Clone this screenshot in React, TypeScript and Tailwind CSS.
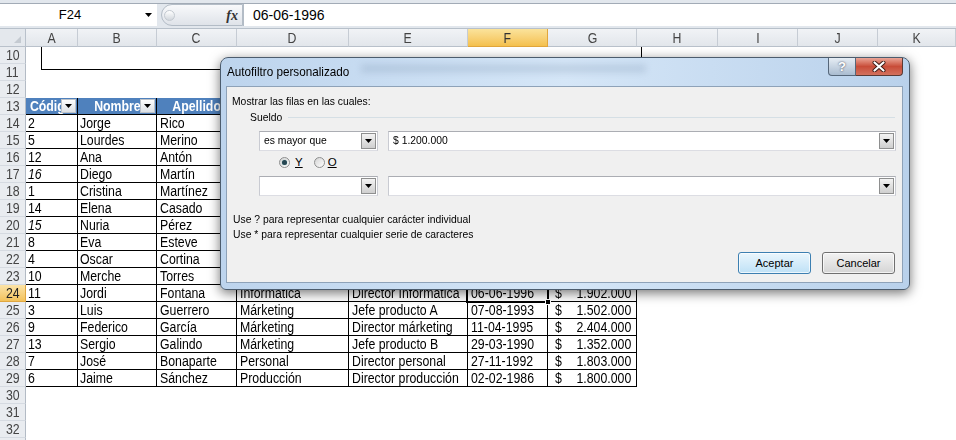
import React from "react"

type Col = { k: string; w: string; pad: string }

const cols: Col[] = [
  { k: "A", w: "w-[52px]", pad: "pl-[2px]" },
  { k: "B", w: "w-[79px]", pad: "pl-[2px]" },
  { k: "C", w: "w-[80px]", pad: "pl-[3px]" },
  { k: "D", w: "w-[112px]", pad: "pl-[3px]" },
  { k: "E", w: "w-[119px]", pad: "pl-[3px]" },
  { k: "F", w: "w-[80px]", pad: "pl-[3px]" },
  { k: "G", w: "w-[89px]", pad: "pl-[3px]" },
  { k: "H", w: "w-[81px]", pad: "pl-[3px]" },
  { k: "I", w: "w-[80px]", pad: "pl-[3px]" },
  { k: "J", w: "w-[80px]", pad: "pl-[3px]" },
  { k: "K", w: "w-[78px]", pad: "pl-[3px]" },
]

// las columnas D-G de la fila 13 quedan tapadas por el diálogo
const headers = ["Código", "Nombre", "Apellido", "", "", "", ""]

// codigo, cursiva, nombre, apellido, departamento, puesto, fecha, sueldo
// (filas 14-23: D-G quedan detrás del diálogo)
const data: [string, boolean, string, string, string, string, string, string][] = [
  ["2", false, "Jorge", "Rico", "", "", "", ""],
  ["5", false, "Lourdes", "Merino", "", "", "", ""],
  ["12", false, "Ana", "Antón", "", "", "", ""],
  ["16", true, "Diego", "Martín", "", "", "", ""],
  ["1", false, "Cristina", "Martínez", "", "", "", ""],
  ["14", false, "Elena", "Casado", "", "", "", ""],
  ["15", true, "Nuria", "Pérez", "", "", "", ""],
  ["8", false, "Eva", "Esteve", "", "", "", ""],
  ["4", false, "Oscar", "Cortina", "", "", "", ""],
  ["10", false, "Merche", "Torres", "", "", "", ""],
  ["11", false, "Jordi", "Fontana", "Informática", "Director Informática", "06-06-1996", "1.902.000"],
  ["3", false, "Luis", "Guerrero", "Márketing", "Jefe producto A", "07-08-1993", "1.502.000"],
  ["9", false, "Federico", "García", "Márketing", "Director márketing", "11-04-1995", "2.404.000"],
  ["13", false, "Sergio", "Galindo", "Márketing", "Jefe producto B", "29-03-1990", "1.352.000"],
  ["7", false, "José", "Bonaparte", "Personal", "Director personal", "27-11-1992", "1.803.000"],
  ["6", false, "Jaime", "Sánchez", "Producción", "Director producción", "02-02-1986", "1.800.000"],
]

function Cx({ children, className = "" }: { children?: React.ReactNode; className?: string }) {
  return <span className={`inline-block whitespace-nowrap origin-left scale-x-[0.88] ${className}`}>{children}</span>
}

function Dx({ children, className = "" }: { children?: React.ReactNode; className?: string }) {
  return <span className={`inline-block whitespace-nowrap origin-left scale-x-[0.9] ${className}`}>{children}</span>
}

function Tri() {
  return (
    <svg width="7" height="4" viewBox="0 0 7 4">
      <path d="M0 0h7L3.5 4z" fill="#000" />
    </svg>
  )
}

function RowHead({ n, active }: { n?: number; active?: boolean }) {
  return (
    <div
      className={
        active
          ? "w-[26px] shrink-0 h-[17px] flex items-center justify-center border-r border-b border-[#e0a740] bg-linear-to-b from-[#fbe3a6] to-[#f3c25a] text-[#222]"
          : "w-[26px] shrink-0 h-[17px] flex items-center justify-center border-r border-b border-[#d5dae1] border-r-[#b3bbc5] bg-[#e9ecf0] text-[#444]"
      }
    >
      <span className="inline-block scale-x-[0.88] text-[14px] leading-[16px]">{n}</span>
    </div>
  )
}

function Combo({ w, text }: { w: string; text?: string }) {
  return (
    <div className={`${w} h-[20px] flex bg-white border border-[#abadb3] border-x-[#c9cbd2] border-b-[#dcdde3] p-[1px]`}>
      <div className="flex-1 flex items-center pl-[3px] text-[11.5px]">
        <Dx>{text}</Dx>
      </div>
      <div className="w-[15px] h-full bg-linear-to-b from-[#f3f3f3] to-[#cfcfcf] border border-[#8e8f8f] flex items-center justify-center">
        <Tri />
      </div>
    </div>
  )
}

function Radio({ checked }: { checked?: boolean }) {
  return (
    <div className="w-[11px] h-[11px] rounded-full border border-[#8e8f8f] bg-linear-to-br from-[#d4d4d4] to-white flex items-center justify-center">
      {checked && <div className="w-[5px] h-[5px] rounded-full bg-[#264652] shadow-[0_0_1px_#6aa]" />}
    </div>
  )
}

export default function App() {
  const emptyTop = [10, 11, 12]
  const emptyBottom = [30, 31, 32]

  return (
    <div className="relative w-[956px] h-[440px] overflow-hidden bg-white font-['Liberation_Sans',Arial,sans-serif] text-black">
      {/* barra de fórmulas */}
      <div className="h-[29px] bg-[#e2e7ed] border-b border-[#b7c0ca] pt-[3px]">
        <div className="h-[23px] flex border-t border-[#a2abb6]">
          <div className="w-[157px] bg-white flex">
            <div className="flex-1 flex items-center justify-center text-[13px]">F24</div>
            <div className="w-[17px] flex items-center justify-center">
              <Tri />
            </div>
          </div>
          <div className="w-[4px] bg-[#e2e7ed]" />
          <div className="w-[82px] rounded-l-full border border-[#b3bcc6] bg-linear-to-b from-[#f8f9fb] to-[#dfe3e9] flex items-center justify-between pl-[2px] pr-[4px]">
            <div className="w-[11px] h-[11px] rounded-full border border-[#c3c9d0] bg-linear-to-b from-white to-[#d2d7dd]" />
            <span className="font-['Liberation_Serif',serif] italic font-bold text-[14px] text-[#333]">fx</span>
          </div>
          <div className="flex-1 bg-white border-l border-[#b3bcc6] flex items-center pl-[9px] text-[14px]">06-06-1996</div>
        </div>
      </div>

      {/* cabeceras de columna */}
      <div className="flex h-[18px]">
        <div className="w-[26px] shrink-0 relative border-r border-b border-[#b9c1cb] bg-[#e4e8ed]">
          <svg className="absolute right-[4px] bottom-[3px]" width="7" height="7" viewBox="0 0 7 7">
            <path d="M7 0v7H0z" fill="#c4cad1" />
          </svg>
        </div>
        {cols.map((c) => (
          <div
            key={c.k}
            className={
              c.k === "F"
                ? `${c.w} shrink-0 flex items-center justify-center border-r border-b border-[#e1a63c] bg-linear-to-b from-[#fbe39b] to-[#f4c04c] text-[#333]`
                : `${c.w} shrink-0 flex items-center justify-center border-r border-b border-[#c6ccd4] border-b-[#b9c1cb] bg-linear-to-b from-[#f1f3f6] to-[#e2e6eb] text-[#444]`
            }
          >
            <span className="inline-block scale-x-[0.88] text-[14px] leading-[16px]">{c.k}</span>
          </div>
        ))}
      </div>

      {emptyTop.map((n) => (
        <div key={n} className="flex h-[17px]">
          <RowHead n={n} />
        </div>
      ))}

      {/* fila 13: encabezados de tabla */}
      <div className="flex h-[17px]">
        <RowHead n={13} />
        {cols.slice(0, 7).map((c, i) => (
          <div
            key={c.k}
            className={`${c.w} shrink-0 relative h-[17px] border-r border-b border-black bg-[#4f81bd] overflow-hidden flex items-center justify-center`}
          >
            <span className="inline-block whitespace-nowrap scale-x-[0.88] text-[14px] leading-[16px] font-bold text-white">{headers[i]}</span>
            <div className="absolute right-[1px] top-[1px] w-[15px] h-[14px] bg-linear-to-b from-[#fdfdfd] to-[#dde1e6] border border-[#bcc2c9] flex items-center justify-center">
              <Tri />
            </div>
          </div>
        ))}
      </div>

      {data.map((d, idx) => {
        const n = 14 + idx
        const vals = [d[0], d[2], d[3], d[4], d[5], d[6]]
        return (
          <div key={n} className="flex h-[17px]">
            <RowHead n={n} active={n === 24} />
            {cols.slice(0, 6).map((c, i) => (
              <div
                key={c.k}
                className={`${c.w} ${c.pad} shrink-0 h-[17px] border-r border-b border-black overflow-hidden text-[14px] leading-[16px]`}
              >
                <Cx className={i === 0 && d[1] ? "italic" : ""}>{vals[i]}</Cx>
              </div>
            ))}
            <div className="w-[89px] shrink-0 h-[17px] border-r border-b border-black flex justify-between pl-[7px] pr-[5px] text-[14px] leading-[16px]">
              {d[7] && <Cx>$</Cx>}
              <span className="inline-block whitespace-nowrap origin-right scale-x-[0.88]">{d[7]}</span>
            </div>
          </div>
        )
      })}

      {emptyBottom.map((n) => (
        <div key={n} className="flex h-[17px]">
          <RowHead n={n} />
        </div>
      ))}
      <div className="flex h-[17px]">
        <RowHead />
      </div>

      {/* forma dibujada sobre las filas 10-11 */}
      <div className="absolute left-[41px] top-[47px] w-[601px] h-[23px] border-x border-b border-black" />

      {/* celda activa F24 */}
      <div className="absolute left-[466px] top-[283px] w-[83px] h-[20px] border-2 border-black" />
      <div className="absolute left-[545px] top-[299px] w-[6px] h-[6px] bg-black border border-white" />

      {/* diálogo Autofiltro personalizado */}
      <div className="absolute left-[220px] top-[57px] w-[690px] h-[233px] rounded-t-[8px] rounded-b-[6px] border border-[#4c5c6d] bg-linear-to-r from-[#bdd4ed] via-[#d5e6f7] to-[#b9d1eb] pl-[5px] pr-[6px] pb-[6px] flex flex-col shadow-[0_3px_12px_rgba(0,0,0,0.55)]">
        <div className="absolute left-[140px] top-[6px] w-[285px] h-[9px] bg-[#7f98b5]/25 blur-[3px]" />
        <div className="relative h-[28px] flex justify-between">
          <div className="self-center pl-[1px] text-[13px]">
            <Dx>Autofiltro personalizado</Dx>
          </div>
          <div className="flex h-[18px]">
            <div className="w-[28px] h-[18px] rounded-bl-[4px] border border-t-0 border-[#56677a] bg-linear-to-b from-[#e6edf4] to-[#aabcd0] flex items-center justify-center">
              <span className="text-white font-bold text-[13px] leading-none [text-shadow:0_0_2px_#334]">?</span>
            </div>
            <div className="w-[47px] h-[18px] rounded-br-[4px] border border-t-0 border-l-0 border-[#5a3a35] bg-linear-to-b from-[#eaa597] via-[#c84c38] to-[#d3715e] flex items-center justify-center">
              <svg width="14" height="11" viewBox="0 0 14 11">
                <path d="M2.5 1.5l9 8M11.5 1.5l-9 8" stroke="#3a1a15" strokeWidth="4" strokeLinecap="round" />
                <path d="M2.5 1.5l9 8M11.5 1.5l-9 8" stroke="#fff" strokeWidth="2.2" strokeLinecap="round" />
              </svg>
            </div>
          </div>
        </div>

        <div className="flex-1 border border-[#8ea2b8] bg-[#f0f0f0] flex flex-col pl-[5px] pr-[6px] pt-[8px] text-[11.5px]">
          <div className="h-[13px] leading-[13px]">
            <Dx>Mostrar las filas en las cuales:</Dx>
          </div>
          <div className="h-[13px] mt-[3px] ml-[18px] flex items-center">
            <div className="w-[38px] leading-[13px]">
              <Dx>Sueldo</Dx>
            </div>
            <div className="flex-1 h-px bg-[#d5dfe5] mr-[1px]" />
          </div>
          <div className="mt-[7px] ml-[27px] flex gap-[10px]">
            <Combo w="w-[119px]" text="es mayor que" />
            <Combo w="flex-1" text="$ 1.200.000" />
          </div>
          <div className="h-[13px] mt-[5px] ml-[47px] flex items-center leading-[13px]">
            <Radio checked />
            <span className="ml-[5px] underline">Y</span>
            <div className="ml-[11px]">
              <Radio />
            </div>
            <span className="ml-[3px] underline">O</span>
          </div>
          <div className="mt-[7px] ml-[27px] flex gap-[10px]">
            <Combo w="w-[119px]" />
            <Combo w="flex-1" />
          </div>
          <div className="h-[15px] mt-[16px] ml-[1px] leading-[15px]">
            <Dx>Use ? para representar cualquier carácter individual</Dx>
          </div>
          <div className="h-[15px] ml-[1px] leading-[15px]">
            <Dx>Use * para representar cualquier serie de caracteres</Dx>
          </div>
          <div className="mt-[10px] pr-[1px] flex justify-end gap-[11px]">
            <button className="w-[73px] h-[22px] rounded-[3px] border border-[#3c7fb1] bg-linear-to-b from-[#eaf6fd] to-[#bfe1f6] shadow-[inset_0_0_0_1px_rgba(255,255,255,0.7)] text-[11px]">
              Aceptar
            </button>
            <button className="w-[73px] h-[22px] rounded-[3px] border border-[#707070] bg-linear-to-b from-[#f3f3f3] to-[#d5d5d5] shadow-[inset_0_0_0_1px_rgba(255,255,255,0.7)] text-[11px]">
              Cancelar
            </button>
          </div>
        </div>
      </div>
    </div>
  )
}
